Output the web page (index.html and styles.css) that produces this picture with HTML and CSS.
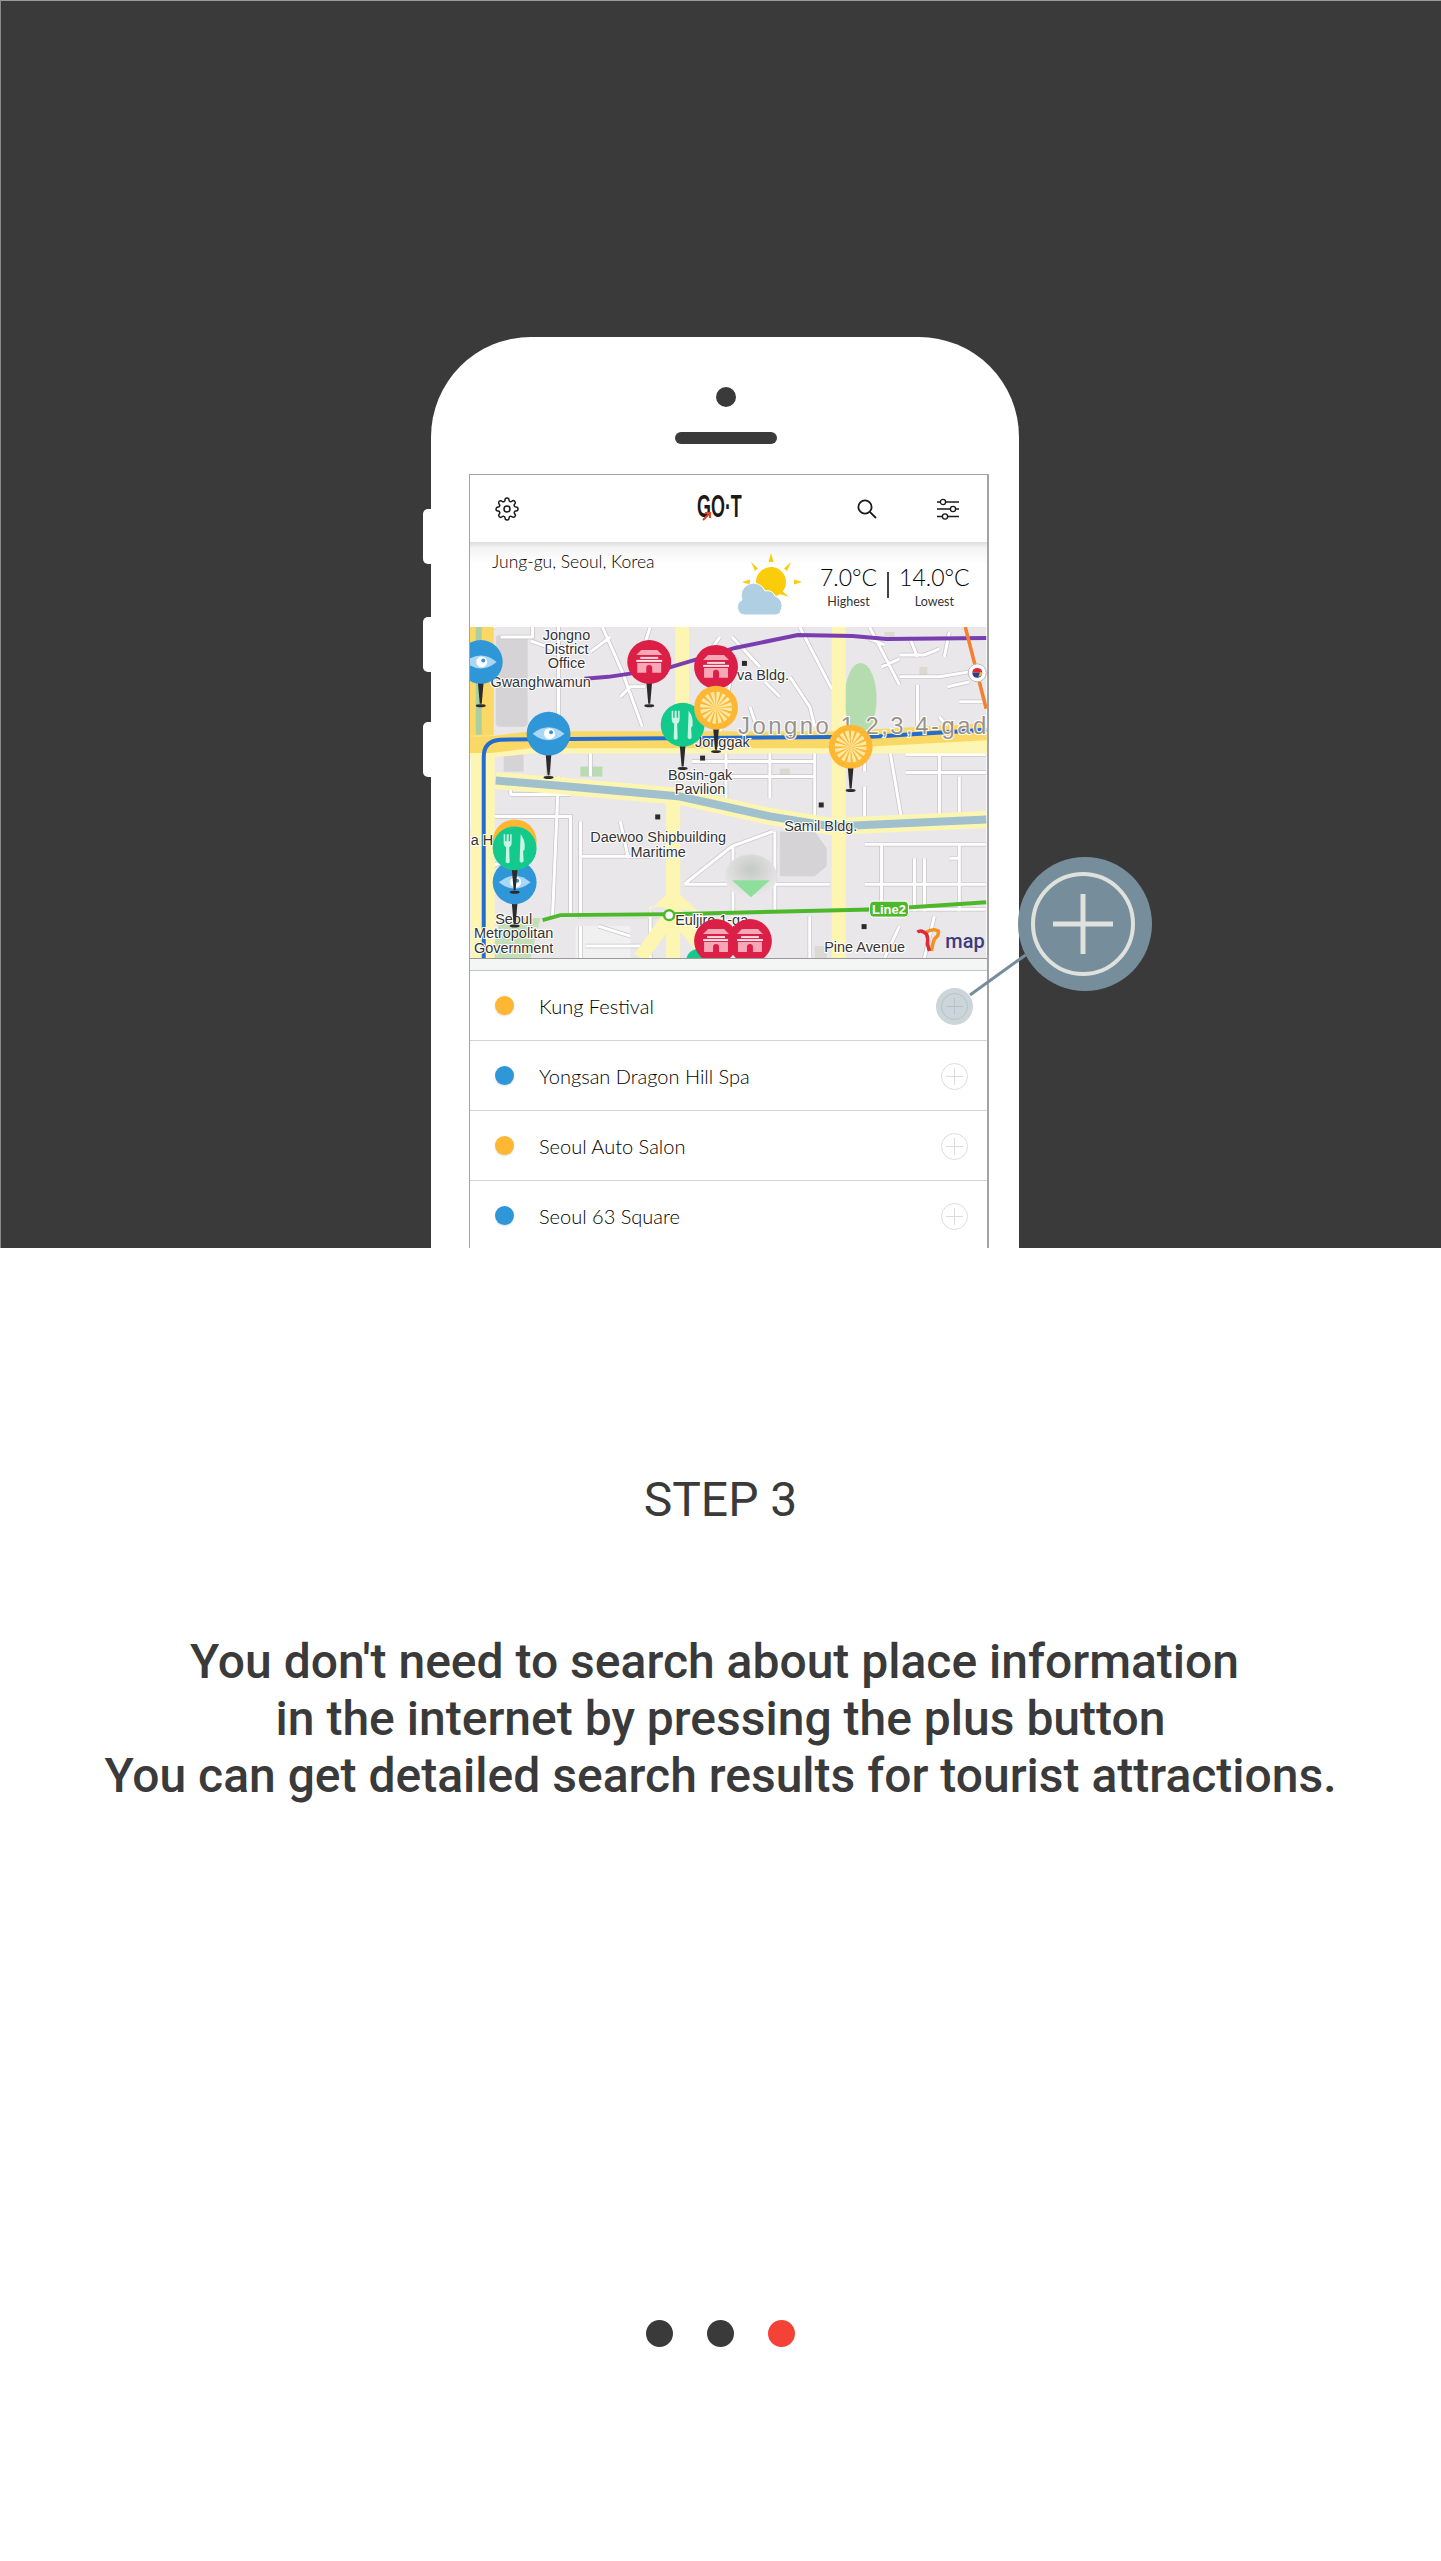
FILE: index.html
```html
<!DOCTYPE html>
<html lang="en">
<head>
    <meta charset="UTF-8">
    <meta name="viewport" content="width=device-width, initial-scale=1.0">
    <title>GO.T Step 3</title>
    <link rel="stylesheet" href="styles.css">
</head>
<body>
    <section class="hero">
        <div class="phone">
            <span class="side-btn side-btn-1"></span>
            <span class="side-btn side-btn-2"></span>
            <span class="side-btn side-btn-3"></span>
            <div class="camera"></div>
            <div class="speaker"></div>

            <div class="screen">
                <header class="app-header">
                    <svg class="icon-gear" viewBox="0 0 24 24"><path d="M12 15a3 3 0 1 0 0-6 3 3 0 0 0 0 6z"/><path d="M19.4 15a1.65 1.65 0 0 0 .33 1.82l.06.06a2 2 0 0 1 0 2.83 2 2 0 0 1-2.83 0l-.06-.06a1.65 1.65 0 0 0-1.82-.33 1.65 1.65 0 0 0-1 1.51V21a2 2 0 0 1-2 2 2 2 0 0 1-2-2v-.09A1.65 1.65 0 0 0 9 19.4a1.65 1.65 0 0 0-1.82.33l-.06.06a2 2 0 0 1-2.83 0 2 2 0 0 1 0-2.83l.06-.06a1.65 1.65 0 0 0 .33-1.82 1.65 1.65 0 0 0-1.51-1H3a2 2 0 0 1-2-2 2 2 0 0 1 2-2h.09A1.65 1.65 0 0 0 4.6 9a1.65 1.65 0 0 0-.33-1.82l-.06-.06a2 2 0 0 1 0-2.83 2 2 0 0 1 2.83 0l.06.06a1.65 1.65 0 0 0 1.82.33H9a1.65 1.65 0 0 0 1-1.51V3a2 2 0 0 1 2-2 2 2 0 0 1 2 2v.09a1.65 1.65 0 0 0 1 1.51 1.65 1.65 0 0 0 1.82-.33l.06-.06a2 2 0 0 1 2.83 0 2 2 0 0 1 0 2.83l-.06.06a1.65 1.65 0 0 0-.33 1.82V9a1.65 1.65 0 0 0 1.51 1H21a2 2 0 0 1 2 2 2 2 0 0 1-2 2h-.09a1.65 1.65 0 0 0-1.51 1z"/></svg>
                    <div class="logo"><span class="logo-text">GO·T</span><svg class="logo-arrow" viewBox="0 0 10 10"><path d="M1 9 L7 3 M3 2 H8 V7" fill="none" stroke="#e5432a" stroke-width="2"/></svg></div>
                    <svg class="icon-search" viewBox="0 0 22 22"><circle cx="9" cy="9" r="6.6"/><path d="M13.8 13.8 L20 20"/></svg>
                    <svg class="icon-sliders" viewBox="0 0 22 22"><path d="M0 4H22M0 11H22M0 18.500H22"/><circle cx="6" cy="4" r="2.600"/><circle cx="16" cy="11" r="2.600"/><circle cx="8" cy="18.500" r="2.600"/></svg>
                </header>

                <div class="weather">
                    <div class="location">Jung-gu, Seoul, Korea</div>
                    <svg class="weather-icon" viewBox="0 0 66 62">
                        <g fill="#fbcc0a">
                            <path d="M35 0 l2.500 9 h-5z"/>
                            <path d="M15 9 l7 6.500 -3 2.500z"/>
                            <path d="M55 9 l-7 6.500 3 2.500z"/>
                            <path d="M6 29 l8 -2.500 v5z"/>
                            <path d="M66 29 l-8 -2.500 v5z"/>
                            <path d="M53 44 l-7 -6 -2.500 3z"/>
                            <circle cx="35" cy="29" r="15"/>
                        </g>
                        <path d="M8 62 a8 8 0 0 1 -2 -15 a12 12 0 0 1 23 -9 a8 8 0 0 1 10 5 a10 10 0 0 1 6 14 q-1 5 -6 5z" fill="#b1cfe3" stroke="#fff" stroke-width="1"/>
                    </svg>
                    <div class="temps">
                        <div class="temp">
                            <div class="temp-value">7.0°C</div>
                            <div class="temp-label">Highest</div>
                        </div>
                        <span class="temp-divider"></span>
                        <div class="temp">
                            <div class="temp-value">14.0°C</div>
                            <div class="temp-label">Lowest</div>
                        </div>
                    </div>
                </div>

                <svg class="map" viewBox="0 0 517 332">
                    <defs>
                        <radialGradient id="cone-fade" cx="50%" cy="35%" r="60%">
                            <stop offset="0" stop-color="#c4cac4"/>
                            <stop offset="1" stop-color="#e9e7e9"/>
                        </radialGradient>
                        <path id="streets" d="M88 0V108M30 10H62V0M132 0L152 45L172 100M330 0L362 62M262 45L250 108M18 0H25M60 14L88 24H118M180 0L170 30M400 0L430 58M430 28H455L470 22M430 50H470L500 45M448 58V100M262 10L290 40M78 120V150M120 122V150M222 135H345M256 122V175M300 122V172M345 122V190M420 122L432 192M436 128H517M436 146H517M470 125V192M245 150H345M40 168H100M40 150V168M20 190H100V290M88 150L82 290M110 195V230H180M110 230V290H200M150 195L158 232M214 258L262 220L303 205M214 258L262 258H360M263 220V285M305 205V285M365 258V285M395 218H517M395 258H517M395 283H517M412 218V285M445 232V285M455 232V285M490 218V285M480 232H490M430 300L415 332M465 290L455 332M340 290V332M255 290V332M180 285V332M20 215H40M400 12L415 18M412 40L430 32M440 10L448 30M480 5L475 30M478 60L500 55M490 75H517M470 90L478 100M150 70L160 60L175 60M120 25L140 10M295 55L310 70M320 50L340 80L345 100M225 45L250 10M285 95L280 80M395 130V145M395 160V190M365 135V150M490 150V190M110 300L110 332M128 300L160 310M115 320H170M35 235L20 240"/>
                        <g id="pin-stem">
                            <path d="M-3 19 L3 19 L1 42 L-1 42Z" fill="#2b2b2b"/>
                            <ellipse cx="0" cy="44" rx="5" ry="1.500" fill="#2b2b2b"/>
                        </g>
                        <g id="pin-red">
                            <use href="#pin-stem"/>
                            <circle r="22" fill="#dc1f47"/>
                            <path d="M-8 -12 H8 L13 -7 H-13Z" fill="#f7a7b5"/>
                            <path d="M-9 -5 H9 V-3 H-9Z" fill="#f9dbe0"/>
                            <path d="M-13 -2 H13 V0 H-13Z" fill="#fbe5e8"/>
                            <path d="M-12 1 H12 V11 H3 V6 A3 3 0 0 0 -3 6 V11 H-12Z" fill="#f7a7b5"/>
                        </g>
                        <g id="pin-blue">
                            <use href="#pin-stem"/>
                            <circle r="22" fill="#2f97d8"/>
                            <path d="M-16 0 Q0 -13 16 0 Q0 13 -16 0Z" fill="#a9d7f4"/>
                            <circle cx="1" cy="0" r="5.500" fill="#fff"/>
                            <circle cx="2.500" cy="-1.500" r="2" fill="#2f97d8"/>
                        </g>
                        <g id="pin-green">
                            <use href="#pin-stem"/>
                            <circle r="22" fill="#14c98c"/>
                            <path d="M-11 -14 V-6 Q-11 -2 -8.500 -1 L-9 14 Q-7 16 -5 14 L-5.500 -1 Q-3 -2 -3 -6 V-14 H-4.500 V-7 H-6 V-14 H-8 V-7 H-9.500 V-14Z" fill="#c9f5e5"/>
                            <path d="M6 -14 Q11 -8 10 1 L8.500 3 L9 13 Q7 16 5 13 Z" fill="#c9f5e5"/>
                        </g>
                        <g id="pin-orange">
                            <use href="#pin-stem"/>
                            <circle r="22" fill="#fdb733"/>
                            <circle r="8" fill="none" stroke="#ffeaa9" stroke-width="16" stroke-dasharray="1.900 1.240"/>
                        </g>
                    </defs>

                    <rect width="517" height="332" fill="#e9e7e9"/>

                    <!-- blocks and parks -->
                    <rect x="25" y="8" width="32" height="92" rx="4" fill="#d5d3d5"/>
                    <path d="M310 205H345L357 222V240L345 250H310Z" fill="#d5d3d5"/>
                    <rect x="33" y="125" width="20" height="20" fill="#d5d3d5"/>
                    <rect x="110" y="140" width="22" height="10" fill="#b8dcae"/>
                    <ellipse cx="391" cy="72" rx="16" ry="36" fill="#b5dcae"/>
                    <path d="M20 332L30 292H70L60 332Z" fill="#c2dfb7"/>
                    <rect x="0" y="200" width="8" height="132" fill="#d5d3d5"/>
                    <path d="M105 300H160V332H105Z" fill="#f1f0f1"/>
                    <g fill="#dcd8d2"><rect x="310" y="142" width="10" height="10"/><rect x="450" y="40" width="8" height="8"/><rect x="415" y="5" width="10" height="5"/><rect x="345" y="320" width="12" height="12"/></g>

                    <use href="#streets" fill="none" stroke="#c8c6c8" stroke-width="4.500"/>
                    <use href="#streets" fill="none" stroke="#fff" stroke-width="3"/>

                    <!-- yellow roads -->
                    <path d="M12 110V332M212 0V115M369 0V332M203 170V332M203 285L170 332M203 285L240 332" fill="none" stroke="#fdf6b2" stroke-width="14"/>
                    <path d="M12 110V332" fill="none" stroke="#fdf6b2" stroke-width="24"/>
                    <path d="M11 0V110" fill="none" stroke="#fad866" stroke-width="24"/>
                    <path d="M8 0V108" fill="none" stroke="#a9cfa2" stroke-width="6"/>
                    <path d="M-5 120H20L60 116H517V108" fill="none" stroke="#fdf6b2" stroke-width="22"/>
                    <path d="M-5 118H20L60 113H370L517 105" fill="none" stroke="#fad866" stroke-width="17"/>
                    <path d="M25 154L86 159L210 170L300 190L362 200L517 193" fill="none" stroke="#fdf6b2" stroke-width="17"/>
                    <path d="M25 154L86 159L210 170L300 190L362 200L517 193" fill="none" stroke="#a1c0cd" stroke-width="8"/>
                    <path d="M180 280L228 285L203 262L178 285Z" fill="#fdf6b2"/>

                    <!-- subway lines -->
                    <path d="M114 52L138 50L198 41L265 21L328 8L383 9L417 12L517 11" fill="none" stroke="#7a3db0" stroke-width="4"/>
                    <path d="M496 0L517 82" fill="none" stroke="#f5802f" stroke-width="3.500"/>
                    <path d="M517 103L402 110L30 113Q13 114 13 130V332" fill="none" stroke="#246cd0" stroke-width="4"/>
                    <path d="M72 294L90 289L200 288L412 283L517 276" fill="none" stroke="#4eb82b" stroke-width="4"/>
                    <circle cx="199" cy="289" r="5" fill="#fff" stroke="#4eb82b" stroke-width="2.500"/>
                    <rect x="400" y="275" width="39" height="16" rx="4" fill="#4eb82b" stroke="#fff"/>
                    <text class="line-label" x="419.500" y="288">Line2</text>

                    <!-- green location cone -->
                    <ellipse cx="281" cy="250" rx="26" ry="22" fill="url(#cone-fade)"/>
                    <path d="M262 254 H300 L281 271Z" fill="#8fdf9c"/>

                    <!-- small place squares -->
                    <g fill="#2b2b2b"><rect x="272" y="34" width="5" height="5"/><rect x="230" y="129" width="5" height="5"/><rect x="349" y="176" width="5" height="5"/><rect x="185" y="188" width="5" height="5"/><rect x="392" y="298" width="5" height="5"/></g>

                    <!-- place names -->
                    <g class="map-labels">
                        <text x="96" y="13">Jongno</text>
                        <text x="96" y="27">District</text>
                        <text x="96" y="41">Office</text>
                        <text x="70" y="60">Gwanghwamun</text>
                        <text x="267" y="53" class="label-left">va Bldg.</text>
                        <text x="225" y="120" class="label-left">Jonggak</text>
                        <text x="230" y="153">Bosin-gak</text>
                        <text x="230" y="168">Pavilion</text>
                        <text x="188" y="216">Daewoo Shipbuilding</text>
                        <text x="188" y="231">Maritime</text>
                        <text x="351" y="205">Samil Bldg.</text>
                        <text x="0" y="219" class="label-left">a Ho</text>
                        <text x="43" y="298">Seoul</text>
                        <text x="43" y="312">Metropolitan</text>
                        <text x="43" y="327">Government</text>
                        <text x="205" y="299" class="label-left">Euljiro 1-ga</text>
                        <text x="395" y="326">Pine Avenue</text>
                        <text x="268" y="107" class="label-big">Jongno 1,2,3,4-gado</text>
                    </g>

                    <!-- pins -->
                    <circle cx="228" cy="335" r="12" fill="#14c98c"/>
                    <use href="#pin-blue" x="10" y="35"/>
                    <use href="#pin-red" x="179" y="35"/>
                    <use href="#pin-red" x="246" y="40"/>
                    <use href="#pin-green" x="212.500" y="98"/>
                    <use href="#pin-orange" x="246" y="81"/>
                    <use href="#pin-blue" x="78" y="107"/>
                    <use href="#pin-orange" x="381" y="120"/>
                    <use href="#pin-blue" x="44" y="256"/>
                    <circle cx="44" cy="215" r="22" fill="#fdb733"/>
                    <use href="#pin-green" x="44" y="222"/>
                    <use href="#pin-red" x="246" y="315"/>
                    <use href="#pin-red" x="280" y="315"/>

                    <!-- taegeuk marker -->
                    <circle cx="508" cy="46" r="9" fill="#fff" stroke="#bbb"/>
                    <path d="M503 46 a5 5 0 0 1 10 0z" fill="#e0262e"/>
                    <path d="M503 46 a5 5 0 0 0 10 0z" fill="#25418f"/>
                    <path d="M513 46 a4 4 0 0 1 -4 4 l2 -5z" fill="#f2b632"/>

                    <!-- tmap logo -->
                    <path d="M457 306Q464 302 469 305Q470 309 465 313Q463 318 462 325" fill="none" stroke="#f39021" stroke-width="3.500"/>
                    <path d="M448 306Q452 303 457 308Q459 312 458 318L460 325" fill="none" stroke="#df2a33" stroke-width="3.500"/>
                    <text class="tmap-text" x="476" y="322">map</text>
                </svg>

                <div class="list-gap"></div>

                <ul class="place-list">
                    <li class="place">
                        <span class="place-dot dot-orange"></span>
                        <span class="place-name">Kung Festival</span>
                        <span class="plus-wrap plus-active"><svg class="plus" viewBox="0 0 27 27"><circle cx="13.500" cy="13.500" r="13"/><path d="M5 13.500H22M13.500 5V22"/></svg></span>
                    </li>
                    <li class="place">
                        <span class="place-dot dot-blue"></span>
                        <span class="place-name">Yongsan Dragon Hill Spa</span>
                        <span class="plus-wrap"><svg class="plus" viewBox="0 0 27 27"><circle cx="13.500" cy="13.500" r="13"/><path d="M5 13.500H22M13.500 5V22"/></svg></span>
                    </li>
                    <li class="place">
                        <span class="place-dot dot-orange"></span>
                        <span class="place-name">Seoul Auto Salon</span>
                        <span class="plus-wrap"><svg class="plus" viewBox="0 0 27 27"><circle cx="13.500" cy="13.500" r="13"/><path d="M5 13.500H22M13.500 5V22"/></svg></span>
                    </li>
                    <li class="place">
                        <span class="place-dot dot-blue"></span>
                        <span class="place-name">Seoul 63 Square</span>
                        <span class="plus-wrap"><svg class="plus" viewBox="0 0 27 27"><circle cx="13.500" cy="13.500" r="13"/><path d="M5 13.500H22M13.500 5V22"/></svg></span>
                    </li>
                </ul>
            </div>

            <svg class="callout" viewBox="0 0 216 168">
                <path d="M89.600 98L34 138" stroke="#768e9b" stroke-width="3"/>
                <circle cx="149" cy="67" r="67" fill="#768e9b"/>
                <circle cx="147" cy="67" r="50" fill="none" stroke="#dfe1dc" stroke-width="4"/>
                <path d="M117 67H177M147 37V97" stroke="#dfe1dc" stroke-width="5"/>
            </svg>
        </div>
    </section>

    <section class="step">
        <h2 class="step-title">STEP 3</h2>
        <p class="step-text">You don't need to search about place information&nbsp;<br>in the internet by pressing the plus button<br>You can get detailed search results for tourist attractions.</p>
        <div class="pager">
            <span class="pager-dot"></span>
            <span class="pager-dot"></span>
            <span class="pager-dot pager-dot-active"></span>
        </div>
    </section>
</body>
</html>
```

FILE: styles.css
```css
* {
    box-sizing: border-box;
}

body {
    margin: 0;
    background-color: #fff;
    font-family: Roboto, "Liberation Sans", sans-serif;
    color: #3a3a3a;
}

.hero {
    height: 1248px;
    padding: 337px 0 0 430px;
    overflow: hidden;
    background-color: #3a3a3a;
    border-top: 1px solid #9a9a9a;
    border-left: 1px solid #8a8a8a;
}

.phone {
    position: relative;
    width: 588px;
    height: 1100px;
    margin-top: -1px;
    padding-top: 50px;
    background-color: #fff;
    border-radius: 100px 100px 0 0;
}

.side-btn {
    position: absolute;
    left: -8px;
    width: 8px;
    height: 55px;
    background-color: #fff;
    border-radius: 5px 0 0 5px;
}

.side-btn-1 { top: 172px; }
.side-btn-2 { top: 280px; }
.side-btn-3 { top: 385px; }

.camera {
    width: 20px;
    height: 20px;
    margin: 0 0 25px 285px;
    background-color: #3a3a3a;
    border-radius: 50%;
}

.speaker {
    width: 102px;
    height: 12px;
    margin: 0 0 30px 244px;
    background-color: #3a3a3a;
    border-radius: 6px;
}

.screen {
    width: 520px;
    margin-left: 38px;
    height: 800px;
    border: 1px solid #a3a3a3;
    border-bottom: 0;
    border-right-width: 2px;
}

.app-header {
    position: relative;
    display: flex;
    align-items: center;
    height: 67px;
    background-color: #fff;
}

.icon-gear {
    width: 24px;
    height: 24px;
    margin-left: 25px;
    fill: none;
    stroke: #1a1a1a;
    stroke-width: 1.5;
}

.logo {
    position: absolute;
    left: 227px;
    top: -2px;
    line-height: 67px;
    font-family: "Liberation Sans", sans-serif;
    font-size: 32px;
    font-weight: bold;
    color: #1a1a1a;
}

.logo-text {
    display: inline-block;
    transform: scaleX(0.56);
    transform-origin: left center;
}

.logo-arrow {
    position: absolute;
    left: 5px;
    top: 38px;
    width: 10px;
    height: 10px;
}

.icon-search {
    width: 22px;
    height: 22px;
    margin-left: 337px;
    fill: none;
    stroke: #1a1a1a;
    stroke-width: 1.8;
}

.icon-sliders {
    width: 22px;
    height: 22px;
    margin-left: 59px;
    fill: #fff;
    stroke: #1a1a1a;
    stroke-width: 1.3;
}

.weather {
    display: flex;
    height: 85px;
    background: linear-gradient(#dedede 0, #f4f4f4 6px, #fff 22px);
    padding: 9px 0 0 22px;
}

.location {
    width: 245px;
    font-family: Lato, sans-serif;
    font-size: 17.5px;
    font-weight: 300;
    color: #000;
}

.weather-icon {
    width: 66px;
    height: 62px;
    margin: 2px 0 0 -1px;
}

.temps {
    display: flex;
    margin-left: 18px;
    padding-top: 11px;
}

.temp {
    text-align: center;
    font-family: Lato, sans-serif;
    color: #000;
}

.temp-value {
    font-size: 23px;
    font-weight: 300;
    line-height: 30px;
}

.temp-label {
    font-size: 12.5px;
    line-height: 20px;
    font-weight: 400;
    color: #333;
}

.temp-divider {
    width: 2px;
    height: 26px;
    margin: 10px 10px 0;
    background-color: #444;
}

.map {
    display: block;
    width: 517px;
    height: 332px;
    border-bottom: 1px solid #999;
}

.map-labels text {
    font-family: "Liberation Sans", sans-serif;
    font-size: 14.5px;
    text-anchor: middle;
    fill: #333;
    stroke: #fff;
    stroke-width: 2px;
    paint-order: stroke;
}

.map-labels .label-left {
    text-anchor: start;
}

.map-labels .label-big {
    text-anchor: start;
    font-size: 24px;
    letter-spacing: 2.5px;
    fill: #9a9288;
}

.line-label {
    font-family: "Liberation Sans", sans-serif;
    font-size: 13px;
    font-weight: bold;
    text-anchor: middle;
    fill: #fff;
}

.tmap-text {
    font-family: Roboto, sans-serif;
    font-size: 20px;
    font-weight: 500;
    fill: #3d3a7e;
}

.list-gap {
    height: 12px;
    background-color: #f4f6f5;
    border-bottom: 1px solid #c4c4c4;
}

.place-list {
    margin: 0;
    padding: 0;
    list-style: none;
}

.place {
    display: flex;
    align-items: center;
    height: 70px;
    padding: 0 19px 0 25px;
    background-color: #fff;
    border-bottom: 1px solid #d4d4d4;
}

.place-dot {
    width: 19px;
    height: 19px;
    margin-right: 25px;
    border-radius: 50%;
    box-shadow: 0 1px 2px rgba(0, 0, 0, 0.15);
}

.dot-orange { background-color: #fdb733; }
.dot-blue { background-color: #2f97d8; }

.place-name {
    flex: 1;
    font-family: Lato, sans-serif;
    font-size: 20px;
    font-weight: 300;
    color: #000;
}

.plus-wrap {
    display: flex;
    align-items: center;
    justify-content: center;
    width: 37px;
    height: 37px;
    margin: 1px -5px 0 0;
    border-radius: 50%;
}

.plus-active {
    background-color: #ccd5d9;
}

.plus {
    width: 27px;
    height: 27px;
    fill: none;
    stroke: #dcdcdc;
    stroke-width: 1;
}

.plus-active .plus {
    stroke: #b6c2c8;
}

.callout {
    position: absolute;
    left: 505px;
    top: 520px;
    width: 216px;
    height: 168px;
}

.step {
    display: flex;
    flex-direction: column;
    align-items: center;
    height: 1313px;
    padding-top: 222px;
    text-align: center;
}

.step-title {
    margin: 0;
    font-size: 48px;
    line-height: 60px;
    font-weight: 400;
}

.step-text {
    margin: 103px 0 0;
    font-size: 48px;
    line-height: 57px;
    font-weight: 500;
}

.pager {
    display: flex;
    gap: 34px;
    margin-top: 516px;
}

.pager-dot {
    width: 27px;
    height: 27px;
    background-color: #3a3a3a;
    border-radius: 50%;
}

.pager-dot-active {
    background-color: #f44336;
}
```
